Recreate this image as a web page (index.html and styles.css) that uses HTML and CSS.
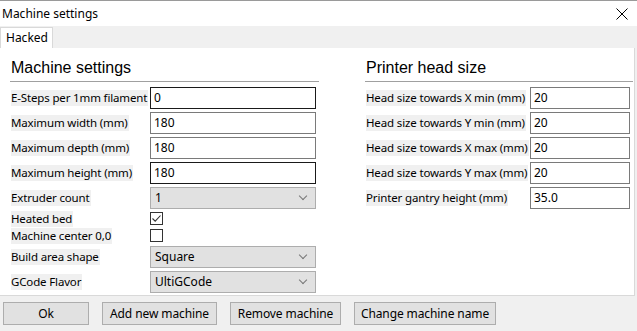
FILE: index.html
```html
<!DOCTYPE html>
<html lang="en">

<head>
  <meta charset="UTF-8">
  <title>Machine settings</title>
  <link rel="stylesheet" href="styles.css">
</head>

<body>
  <div class="window">
    <div class="titlebar">
      <span class="title">Machine settings</span>
      <svg class="close" width="12" height="12" viewBox="0 0 12 12">
        <path d="M0.5 0.5L11.5 11.5M11.5 0.5L0.5 11.5" stroke="#000" stroke-width="1" fill="none" />
      </svg>
    </div>

    <div class="tabs">
      <div class="tab active">Hacked</div>
    </div>

    <div class="panel">
      <div class="column left">
        <h2>Machine settings</h2>
        <div class="row">
          <div class="label"><span>E-Steps per 1mm filament</span></div>
          <input class="field focus" type="text" value="0">
        </div>
        <div class="row">
          <div class="label"><span>Maximum width (mm)</span></div>
          <input class="field" type="text" value="180">
        </div>
        <div class="row">
          <div class="label"><span>Maximum depth (mm)</span></div>
          <input class="field" type="text" value="180">
        </div>
        <div class="row">
          <div class="label"><span>Maximum height (mm)</span></div>
          <input class="field focus" type="text" value="180">
        </div>
        <div class="row">
          <div class="label"><span>Extruder count</span></div>
          <div class="select">1<span class="chevron"></span></div>
        </div>
        <div class="row check">
          <div class="label"><span>Heated bed</span></div>
          <span class="checkbox checked">
            <svg width="11" height="11" viewBox="0 0 11 11">
              <path d="M1.5 5.5L4.2 8.2L9.5 2.5" stroke="#333" stroke-width="1.1" fill="none" />
            </svg>
          </span>
        </div>
        <div class="row check">
          <div class="label"><span>Machine center 0,0</span></div>
          <span class="checkbox"></span>
        </div>
        <div class="row">
          <div class="label"><span>Build area shape</span></div>
          <div class="select">Square<span class="chevron"></span></div>
        </div>
        <div class="row">
          <div class="label"><span>GCode Flavor</span></div>
          <div class="select">UltiGCode<span class="chevron"></span></div>
        </div>
      </div>

      <div class="column right">
        <h2>Printer head size</h2>
        <div class="row">
          <div class="label"><span>Head size towards X min (mm)</span></div>
          <input class="field" type="text" value="20">
        </div>
        <div class="row">
          <div class="label"><span>Head size towards Y min (mm)</span></div>
          <input class="field" type="text" value="20">
        </div>
        <div class="row">
          <div class="label"><span>Head size towards X max (mm)</span></div>
          <input class="field" type="text" value="20">
        </div>
        <div class="row">
          <div class="label"><span>Head size towards Y max (mm)</span></div>
          <input class="field" type="text" value="20">
        </div>
        <div class="row">
          <div class="label"><span>Printer gantry height (mm)</span></div>
          <input class="field" type="text" value="35.0">
        </div>
      </div>
    </div>

    <div class="footer">
      <button class="btn ok">Ok</button>
      <button class="btn add">Add new machine</button>
      <button class="btn remove">Remove machine</button>
      <button class="btn rename">Change machine name</button>
    </div>
  </div>
</body>

</html>
```

FILE: styles.css
```css
* {
  margin: 0;
  padding: 0;
  box-sizing: border-box;
}

body {
  font-family: 'Noto Sans', 'Open Sans', sans-serif;
  font-size: 12px;
  color: #000;
  background: #f0f0f0;
}

.window {
  width: 637px;
  height: 331px;
  display: flex;
  flex-direction: column;
  background: #f0f0f0;
}

/* Title bar */
.titlebar {
  height: 26px;
  background: #fff;
  border-top: 1px solid #9a9a9a;
  display: flex;
  align-items: center;
  justify-content: space-between;
  padding: 0 9px 0 2px;
}

.title {
  line-height: 16px;
}

/* Tabs */
.tabs {
  height: 22px;
  display: flex;
  align-items: flex-end;
}

.tab {
  height: 21px;
  width: 53px;
  padding-left: 5px;
  line-height: 19px;
  background: #fff;
  border: 1px solid #d9d9d9;
  border-bottom: none;
}

/* Panel */
.panel {
  height: 248px;
  width: 635px;
  background: #fff;
  border-right: 1px solid #d9d9d9;
  border-bottom: 1px solid #d9d9d9;
  display: flex;
  padding: 10px 0 0 10px;
  gap: 46px;
}

.column {
  display: flex;
  flex-direction: column;
}

.column.left {
  width: 309px;
}

.column.right {
  width: 268px;
}

h2 {
  font-family: 'Liberation Sans', Arial, sans-serif;
  font-weight: normal;
  font-size: 16px;
  line-height: 20px;
  height: 24px;
  padding-left: 1px;
  border-bottom: 1px solid #a0a0a0;
  margin-bottom: 3px;
}

.row {
  display: flex;
  align-items: center;
  height: 25px;
  padding-left: 1px;
}

.row.check {
  height: 17px;
}

.label {
  flex-shrink: 0;
  white-space: nowrap;
  font-size: 11.5px;
  letter-spacing: -0.15px;
}

.label span {
  display: inline-block;
  background: #f0f0f0;
  line-height: 16px;
  padding-right: 1px;
}

.left .label {
  width: 139px;
}

.right .label {
  width: 164px;
}

.field {
  height: 22px;
  border: 1px solid #7a7a7a;
  font-family: inherit;
  font-size: 12px;
  padding: 0 3px;
  outline: none;
  background: #fff;
  color: #000;
}

.left .field,
.left .select {
  width: 166px;
}

.right .field {
  width: 100px;
}

.field.focus {
  border-color: #1a1a1a;
}

.select {
  height: 22px;
  background: #e1e1e1;
  border: 1px solid #adadad;
  display: flex;
  align-items: center;
  justify-content: space-between;
  padding: 0 9px 0 4px;
}

.chevron {
  width: 6px;
  height: 6px;
  border-right: 1px solid #777;
  border-bottom: 1px solid #777;
  transform: rotate(45deg);
  margin-top: -4px;
}

.checkbox {
  width: 13px;
  height: 13px;
  border: 1px solid #333;
  background: #fff;
  display: flex;
  align-items: center;
  justify-content: center;
}

/* Footer */
.footer {
  flex: 1;
  display: flex;
  align-items: center;
  gap: 13px;
  padding: 0 0 0 3px;
}

.btn {
  height: 23px;
  padding: 0;
  flex-shrink: 0;
  background: #e1e1e1;
  border: 1px solid #adadad;
  font-family: inherit;
  font-size: 12px;
  letter-spacing: -0.1px;
  color: #000;
}

.btn.ok {
  width: 86px;
}

.btn.add {
  width: 115px;
}

.btn.remove {
  width: 111px;
}

.btn.rename {
  width: 142px;
}
```
